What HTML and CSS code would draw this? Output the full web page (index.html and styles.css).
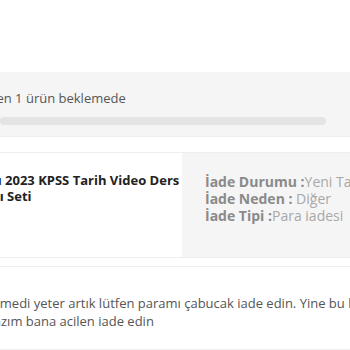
FILE: index.html
```html
<!DOCTYPE html>
<html lang="tr">
<head>
  <meta charset="UTF-8" />
  <title>İade Talebi</title>
  <meta name="viewport" content="width=device-width, initial-scale=1" />
  <link rel="stylesheet" href="styles.css">
</head>
<body>
  <div class="page">
    <div class="status">
      <p class="status-text">İade talebinizden 1 ürün beklemede</p>
      <div class="bar"></div>
    </div>

    <div class="item">
      <div class="item-name">
        <p class="title">
          <span class="title-line one">Pegem Akademi Yayıncılığı 2023 KPSS Tarih Video Ders</span>
          <span class="title-line two">Anlatımı Seti</span>
        </p>
      </div>
      <div class="item-info">
        <p><b>İade Durumu :</b>Yeni Talep</p>
        <p><b>İade Neden :</b> Diğer</p>
        <p><b>İade Tipi :</b>Para iadesi</p>
      </div>
    </div>

    <div class="message">
      <p class="message-text">
        <span class="msg-line one">Ürün hala gelmedi yeter artık lütfen paramı çabucak iade edin. Yine bu hafta içinde</span>
        <span class="msg-line two">paraya ihtiyacım var, para lazım bana acilen iade edin</span>
      </p>
    </div>
  </div>
</body>
</html>
```

FILE: styles.css
```css
body {
  margin: 0;
  overflow: hidden;
  background: #fff;
  font-family: 'Open Sans', sans-serif;
}
p {
  margin: 0;
}
.page {
  padding-top: 72px;
}

/* bekleyen ürün bandı */
.status {
  background: #f5f5f5;
  height: 65px;
  padding-top: 18px;
  box-sizing: border-box;
  border-bottom: 1px solid #eee;
}
.status-text {
  white-space: nowrap;
  margin-left: -92px;
  font-size: 13px;
  line-height: 16px;
  color: #555;
}
.bar {
  width: 326px;
  height: 8px;
  margin-top: 11px;
  border-radius: 4px;
  background: #e4e4e4;
}

/* ürün satırı */
.item {
  display: flex;
  height: 104px;
  margin-top: 15px;
  border-top: 1px solid #eee;
  border-bottom: 1px solid #eee;
}
.item-name {
  flex-shrink: 0;
  width: 182px;
  overflow: hidden;
  padding-top: 19px;
}
.title {
  font-size: 13px;
  font-weight: 700;
  line-height: 16px;
  color: #222;
}
.title-line {
  display: block;
  white-space: nowrap;
}
.title-line.one {
  margin-left: -172px;
}
.title-line.two {
  margin-left: -52px;
}
.item-info {
  flex: 1;
  min-width: 0;
  overflow: hidden;
  background: #f5f5f5;
  padding: 20px 0 0 23px;
  white-space: nowrap;
  font-size: 14px;
  line-height: 17px;
  color: #a8a8a8;
}
.item-info b {
  color: #8a8a8a;
}

/* müşteri mesajı */
.message {
  margin-top: 8px;
  border-top: 1px solid #eee;
  border-bottom: 1px solid #eee;
  padding: 27px 0 19px;
  overflow: hidden;
}
.message-text {
  font-size: 13px;
  line-height: 18px;
  color: #555;
}
.msg-line {
  display: block;
  white-space: nowrap;
}
.msg-line.one {
  margin-left: -81px;
}
.msg-line.two {
  margin-left: -169px;
}
```
